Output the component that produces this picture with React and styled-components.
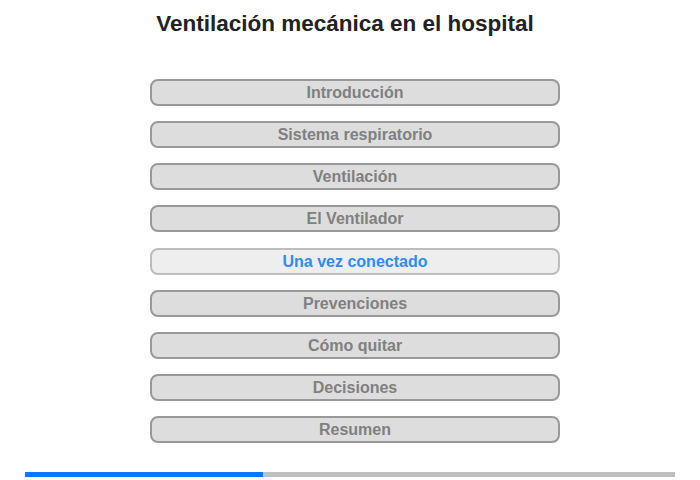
import React from "react";
import styled, { createGlobalStyle } from "styled-components";

const Global = createGlobalStyle`
  html, body { margin: 0; padding: 0; background: #fff; }
  body { font-family: "Liberation Sans", Arial, sans-serif; }
`;

const Page = styled.div`
  width: 700px;
  height: 480px;
  display: flex;
  flex-direction: column;
  align-items: center;
`;

const Title = styled.h1`
  margin: 0;
  padding: 11px 10px 0 0;
  font-size: 22.5px;
  line-height: 26px;
  font-weight: bold;
  color: #222;
  text-align: center;
`;

const Menu = styled.nav`
  display: flex;
  flex-direction: column;
  gap: 15.125px;
  margin: 42px 0 0 10px;
`;

const Item = styled.div`
  box-sizing: border-box;
  width: 410px;
  height: 27px;
  border: 2px solid ${(p) => (p.$active ? "#bdbdbd" : "#999")};
  border-radius: 8px;
  background: ${(p) => (p.$active ? "#eeeeee" : "#dddddd")};
  color: ${(p) => (p.$active ? "#2b8cff" : "#808080")};
  font-size: 16px;
  font-weight: bold;
  line-height: 23px;
  text-align: center;
`;

const Progress = styled.div`
  margin-top: 29px;
  width: 650px;
  height: 5px;
  background: #c0c0c0;
  display: flex;
`;

const Fill = styled.div`
  height: 100%;
  background: #007bff;
`;

const items = [
  "Introducción",
  "Sistema respiratorio",
  "Ventilación",
  "El Ventilador",
  "Una vez conectado",
  "Prevenciones",
  "Cómo quitar",
  "Decisiones",
  "Resumen",
];

export default function App() {
  return (
    <>
      <Global />
      <Page>
        <Title>Ventilación mecánica en el hospital</Title>
        <Menu>
          {items.map((t, i) => (
            <Item key={t} $active={i === 4}>
              {t}
            </Item>
          ))}
        </Menu>
        <Progress>
          <Fill style={{ width: `${(238 / 650) * 100}%` }} />
        </Progress>
      </Page>
    </>
  );
}
